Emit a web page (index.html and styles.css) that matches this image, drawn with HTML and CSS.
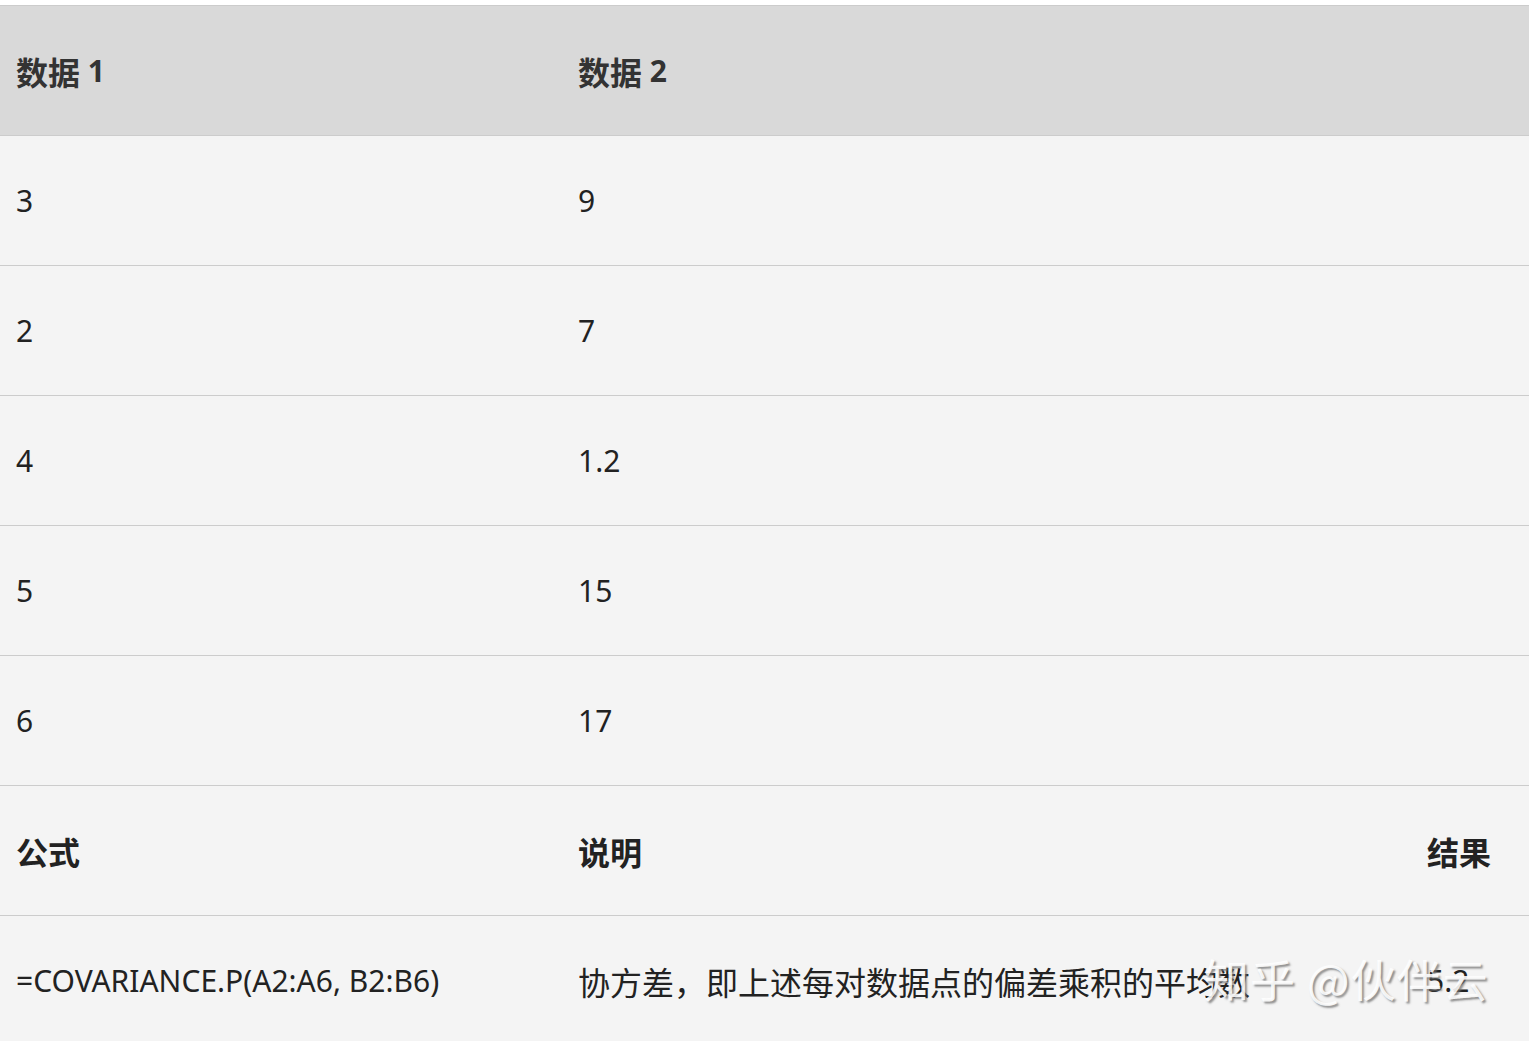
FILE: index.html
```html
<!DOCTYPE html>
<html lang="zh-CN">
<head>
<meta charset="utf-8">
<title>COVARIANCE.P</title>
<link rel="stylesheet" href="styles.css">
</head>
<body>
<div class="page">
  <div class="table">
    <div class="row head">
      <div class="cell"><span class="zh">数据</span>&nbsp;1</div>
      <div class="cell span"><span class="zh">数据</span>&nbsp;2</div>
    </div>
    <div class="row"><div class="cell">3</div><div class="cell span">9</div></div>
    <div class="row"><div class="cell">2</div><div class="cell span">7</div></div>
    <div class="row"><div class="cell">4</div><div class="cell span">1.2</div></div>
    <div class="row"><div class="cell">5</div><div class="cell span">15</div></div>
    <div class="row"><div class="cell">6</div><div class="cell span">17</div></div>
    <div class="row subhead">
      <div class="cell zh">公式</div>
      <div class="cell zh">说明</div>
      <div class="cell zh">结果</div>
    </div>
    <div class="row">
      <div class="cell">=COVARIANCE.P(A2:A6, B2:B6)</div>
      <div class="cell zh">协方差，即上述每对数据点的偏差乘积的平均数</div>
      <div class="cell">5.2</div>
    </div>
  </div>
  <div class="watermark">知乎 @伙伴云</div>
</div>
</body>
</html>
```

FILE: styles.css
```css
html, body {
  margin: 0;
  padding: 0;
  background: #ffffff;
}
.page {
  position: relative;
  padding-top: 5px;
  font-family: "Noto Sans", "Noto Sans CJK SC", sans-serif;
  font-size: 30px;
  color: #222;
}
.zh {
  font-size: 32px;
}
.table {
  border-top: 1px solid #cccccc;
}
.row {
  display: grid;
  grid-template-columns: 562px 849px 1fr;
  height: 129px;
  background: #f4f4f4;
  border-bottom: 1px solid #cccccc;
}
.cell {
  display: flex;
  align-items: center;
  padding-left: 16px;
  white-space: nowrap;
}
.cell.span {
  grid-column: 2 / 4;
}
.head {
  background: #d9d9d9;
  font-weight: 700;
  color: #333;
}
.subhead {
  font-weight: 700;
}
.watermark {
  position: absolute;
  left: 1204px;
  top: 946px;
  font-family: "Noto Sans CJK SC", sans-serif;
  font-size: 45px;
  color: rgba(255, 255, 255, 0.9);
  text-shadow: 2px 2px 2px rgba(110, 110, 110, 0.75);
  letter-spacing: 1px;
}
```
